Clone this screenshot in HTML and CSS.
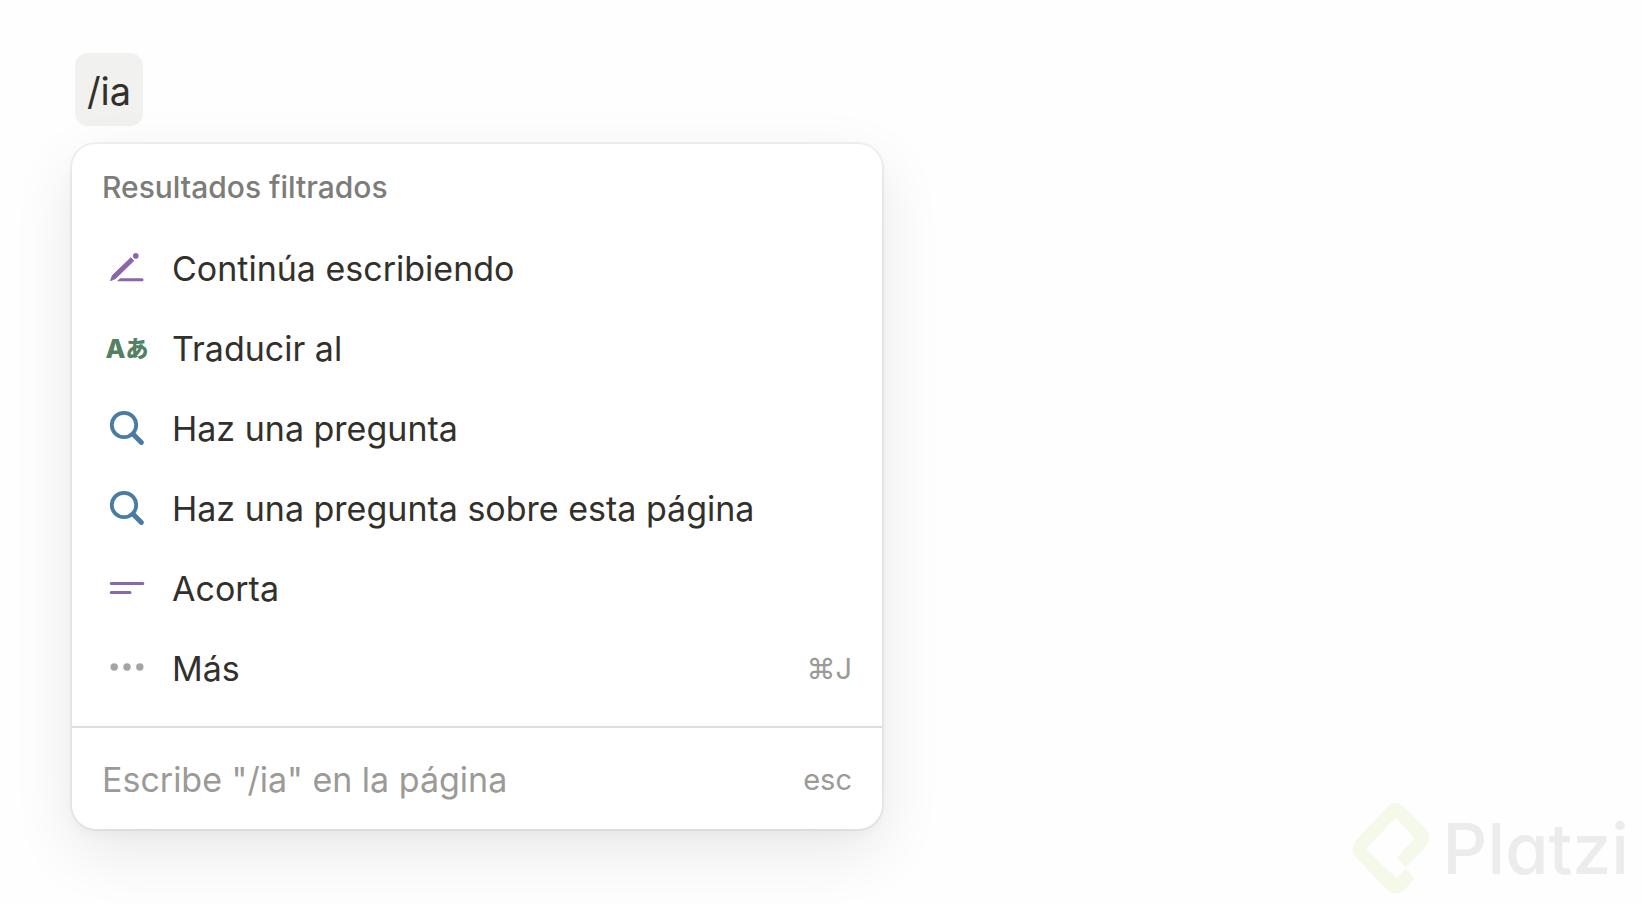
FILE: index.html
```html
<!DOCTYPE html>
<html lang="es">
<head>
    <meta charset="UTF-8">
    <meta name="viewport" content="width=device-width, initial-scale=1.0">
    <title>Comandos de IA</title>
    <link rel="stylesheet" href="styles.css">
</head>
<body>
    <main class="page">
        <input class="command" type="text" value="/ia" aria-label="Comando">

        <div class="menu">
            <h2 class="menu-title">Resultados filtrados</h2>
            <div class="menu-list">
                <button type="button" class="item">
                    <svg class="icon purple" viewBox="0 0 50 50" aria-hidden="true">
                        <path d="M8.6 37.6 L10.4 32.6 L28.8 14.8 L31.8 17.8 L13.4 35.6 Z" fill="currentColor" stroke="currentColor" stroke-width="1" stroke-linejoin="round"/>
                        <circle cx="33.8" cy="12.9" r="2.8" fill="currentColor"/>
                        <path d="M15 38.2 L18.2 35.2 H40 a1.5 1.5 0 0 1 0 3 Z" fill="currentColor"/>
                    </svg>
                    <span>Continúa escribiendo</span>
                </button>
                <button type="button" class="item">
                    <span class="icon lang green" aria-hidden="true">A<span class="kana">あ</span></span>
                    <span>Traducir al</span>
                </button>
                <button type="button" class="item">
                    <svg class="icon blue" viewBox="0 0 50 50" fill="none" stroke="currentColor" stroke-linecap="round" aria-hidden="true">
                        <circle cx="22" cy="22" r="12.2" stroke-width="3.8"/>
                        <path d="M31 31 L39.4 39.4" stroke-width="5"/>
                    </svg>
                    <span>Haz una pregunta</span>
                </button>
                <button type="button" class="item">
                    <svg class="icon blue" viewBox="0 0 50 50" fill="none" stroke="currentColor" stroke-linecap="round" aria-hidden="true">
                        <circle cx="22" cy="22" r="12.2" stroke-width="3.8"/>
                        <path d="M31 31 L39.4 39.4" stroke-width="5"/>
                    </svg>
                    <span>Haz una pregunta sobre esta página</span>
                </button>
                <button type="button" class="item">
                    <svg class="icon purple" viewBox="0 0 50 50" fill="none" stroke="currentColor" stroke-width="3" stroke-linecap="round" aria-hidden="true">
                        <path d="M9.2 20.5 H40.8 M9.2 29.5 H28"/>
                    </svg>
                    <span>Acorta</span>
                </button>
                <button type="button" class="item">
                    <svg class="icon gray" viewBox="0 0 50 50" fill="currentColor" aria-hidden="true">
                        <circle cx="12.2" cy="24" r="3.7"/>
                        <circle cx="25" cy="24" r="3.7"/>
                        <circle cx="37.8" cy="24" r="3.7"/>
                    </svg>
                    <span>Más</span>
                    <kbd class="key">⌘J</kbd>
                </button>
            </div>
            <div class="menu-footer">
                <span>Escribe "/ia" en la página</span>
                <kbd class="key">esc</kbd>
            </div>
        </div>
    </main>

    <div class="brand">
        <svg class="brand-mark" viewBox="15 15 246 291" aria-hidden="true">
            <path fill="currentColor" d="M129 34 Q152 13 175 34 L243 103 Q263 129 243 153 L183 218 L155 190 L208 130 L152 68 L63 162 L155 250 L183 218 L208 252 L177 286 Q152 307 127 286 L33 187 Q12 162 33 136 Z"/>
        </svg>
        <span class="brand-name">Platzi</span>
    </div>
</body>
</html>
```

FILE: styles.css
```css
* {
    box-sizing: border-box;
}
body {
    margin: 0;
    min-height: 100vh;
    background-color: #fefefe;
    color: #32302c;
    font-family: Inter, "Noto Sans CJK JP", sans-serif;
}
.page {
    padding: 53px 72px;
}
.command {
    display: block;
    width: 68px;
    height: 73px;
    margin: 0 0 18px 3px;
    padding: 2px 0 0;
    border: none;
    border-radius: 13px;
    background-color: #f1f1ef;
    color: inherit;
    font-family: inherit;
    font-size: 38px;
    text-align: center;
}
.menu {
    max-width: 810px;
    border-radius: 24px;
    background-color: #fff;
    box-shadow:
        0 0 0 2px rgba(15, 15, 15, 0.05),
        0 6px 12px rgba(15, 15, 15, 0.03),
        0 22px 64px rgba(15, 15, 15, 0.09);
}
.menu-title {
    margin: 0;
    padding: 23px 30px 21px;
    color: #7d7c78;
    font-size: 30px;
    font-weight: 500;
    line-height: 40px;
}
.menu-list {
    padding-bottom: 18px;
}
.item {
    display: flex;
    align-items: center;
    gap: 20px;
    width: 100%;
    height: 80px;
    padding: 0 30px;
    border: none;
    background: none;
    color: inherit;
    font-family: inherit;
    font-size: 34px;
    text-align: left;
    cursor: pointer;
}
.icon {
    flex: none;
    width: 50px;
    height: 50px;
}
.lang {
    display: flex;
    align-items: center;
    justify-content: center;
    font-size: 26px;
    font-weight: 800;
}
.kana {
    font-family: "Noto Sans CJK JP", sans-serif;
    font-size: 23px;
    font-weight: 900;
    line-height: 26px;
    padding-bottom: 2px;
}
.purple {
    color: #8a67ab;
}
.green {
    color: #548164;
}
.blue {
    color: #487ca5;
}
.gray {
    color: #a4a4a2;
}
.key {
    margin-left: auto;
    color: #9b9a97;
    font-family: inherit;
    font-size: 29px;
}
.menu-footer {
    display: flex;
    align-items: center;
    height: 103px;
    padding: 2px 30px 0;
    border-top: 2px solid #dededd;
    color: #9b9a97;
    font-size: 34px;
}
/* watermark over the bottom right corner */
.brand {
    position: fixed;
    right: 13px;
    bottom: 7px;
    display: flex;
    align-items: center;
    gap: 11px;
}
.brand-mark {
    width: 82px;
    height: 97px;
    color: #f4f9e9;
}
.brand-name {
    color: #ececec;
    font-size: 70px;
    font-weight: 500;
    font-feature-settings: "cv11";
    line-height: 80px;
}
```
